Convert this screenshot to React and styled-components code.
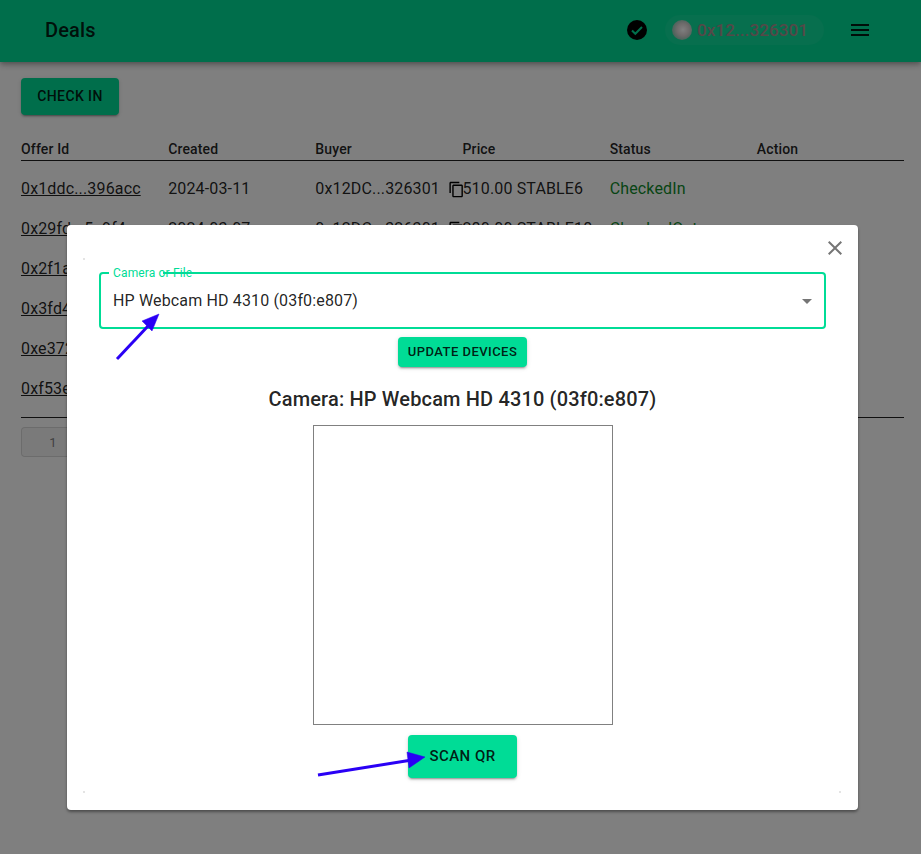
import React from "react";
import styled, { createGlobalStyle } from "styled-components";

const GlobalStyle = createGlobalStyle`
  html, body {
    margin: 0;
    padding: 0;
    background: #fff;
    font-family: Roboto, "Liberation Sans", sans-serif;
    color: rgba(0, 0, 0, 0.87);
  }
`;

const Page = styled.div`
  position: relative;
  width: 921px;
  height: 854px;
  overflow: hidden;
`;

const Header = styled.header`
  display: flex;
  align-items: center;
  height: 62px;
  padding: 0 49px 2px 45px;
  box-sizing: border-box;
  background: #00dc96;
  box-shadow: 0 2px 4px -1px rgba(0, 0, 0, 0.2), 0 4px 5px rgba(0, 0, 0, 0.14),
    0 1px 10px rgba(0, 0, 0, 0.12);
`;

const Title = styled.h1`
  flex: 1;
  margin: 0;
  font-size: 20px;
  font-weight: 500;
  line-height: 32px;
  letter-spacing: 0.15px;
`;

const VerifiedIcon = styled.svg`
  width: 24px;
  height: 24px;
  margin-right: 16px;
`;

const WalletChip = styled.div`
  display: flex;
  align-items: center;
  gap: 5px;
  width: 159px;
  height: 30px;
  box-sizing: border-box;
  padding-left: 7px;
  border-radius: 15px;
  background: rgba(255, 255, 255, 0.06);
  margin-right: 24px;
  font-size: 17px;
  font-weight: 500;
  letter-spacing: 0.1px;
  color: #a89090;
`;

const Avatar = styled.div`
  width: 20px;
  height: 20px;
  border-radius: 50%;
  background: radial-gradient(circle at 55% 48%, #fff 0%, #dcd6d6 40%, #4fb896 100%);
`;

const MenuIcon = styled.svg`
  width: 24px;
  height: 24px;
`;

const Content = styled.main`
  padding: 16px 17px 0 21px;
`;

const Button = styled.button`
  display: block;
  border: 0;
  border-radius: 4px;
  background: #00dc96;
  color: rgba(0, 0, 0, 0.87);
  font-family: inherit;
  font-weight: 500;
  text-transform: uppercase;
  font-size: ${(p) => p.$size || 14}px;
  letter-spacing: ${(p) => p.$spacing || 0.4}px;
  width: ${(p) => p.$w}px;
  height: ${(p) => p.$h}px;
  padding: 0 0 2px;
  box-shadow: 0 3px 1px -2px rgba(0, 0, 0, 0.2), 0 2px 2px rgba(0, 0, 0, 0.14),
    0 1px 5px rgba(0, 0, 0, 0.12);
`;

const Table = styled.div`
  margin-top: 23px;
  border-bottom: 1px solid rgba(0, 0, 0, 0.87);
  padding-bottom: 9px;
`;

const Row = styled.div`
  display: grid;
  grid-template-columns: repeat(6, 147.17px);
  align-items: center;
  height: 40px;
  font-size: 16px;
  letter-spacing: 0.15px;
`;

const HeadRow = styled(Row)`
  height: 23px;
  margin-bottom: 7px;
  font-size: 14px;
  font-weight: 500;
  border-bottom: 1px solid rgba(0, 0, 0, 0.87);
  box-sizing: border-box;
`;

const OfferLink = styled.a`
  color: inherit;
  text-decoration: underline;
`;

const BuyerCell = styled.div`
  display: flex;
  align-items: center;
  white-space: nowrap;
`;

const CopyIcon = styled.svg`
  width: 17px;
  height: 17px;
  margin: 2px 0 0 8px;
  flex-shrink: 0;
`;

const Status = styled.div`
  color: #0f8a2a;
`;

const Pagination = styled.div`
  display: flex;
  margin-top: 9px;
`;

const PageButton = styled.div`
  display: flex;
  align-items: center;
  justify-content: center;
  width: 64px;
  height: 30px;
  border: 1px solid rgba(0, 0, 0, 0.12);
  border-radius: 4px;
  box-sizing: border-box;
  background: rgba(0, 0, 0, 0.04);
  font-size: 13px;
  color: rgba(0, 0, 0, 0.5);
`;

const Overlay = styled.div`
  position: absolute;
  inset: 0;
  background: rgba(0, 0, 0, 0.5);
`;

const Modal = styled.section`
  position: absolute;
  left: 67px;
  top: 225px;
  width: 791px;
  height: 585px;
  box-sizing: border-box;
  padding: 47px 32px 0;
  display: flex;
  flex-direction: column;
  align-items: center;
  background: #fff;
  border-radius: 4px;
  box-shadow: 0 2px 3px rgba(0, 0, 0, 0.4);
`;

const CloseButton = styled.svg`
  position: absolute;
  top: 11px;
  right: 11px;
  width: 24px;
  height: 24px;
`;

const CornerMark = styled.span`
  position: absolute;
  left: ${(p) => p.$x}px;
  top: ${(p) => p.$y}px;
  width: 2px;
  height: 2px;
  background: #e4e4e4;
`;

const SelectBox = styled.div`
  position: relative;
  display: flex;
  align-items: center;
  justify-content: space-between;
  align-self: stretch;
  height: 57px;
  box-sizing: border-box;
  border: 2px solid #00dc96;
  border-radius: 4px;
  padding: 0 9px 0 12px;
  font-size: 16px;
  letter-spacing: 0.15px;
`;

const SelectLabel = styled.span`
  position: absolute;
  left: 12px;
  top: -8px;
  font-size: 12px;
  line-height: 14px;
  letter-spacing: 0.15px;
  color: #00dc96;
`;

const Notch = styled.span`
  position: absolute;
  left: 8px;
  top: -2px;
  width: 54px;
  height: 2px;
  background: #fff;
`;

const Caret = styled.svg`
  width: 24px;
  height: 24px;
  margin-right: -4px;
`;

const ScannerTitle = styled.h2`
  margin: 20px 0 14px;
  font-size: 20px;
  font-weight: 500;
  line-height: 24px;
  letter-spacing: 0.15px;
`;

const VideoFrame = styled.div`
  width: 300px;
  height: 300px;
  box-sizing: border-box;
  border: 1px solid #808080;
  margin-bottom: 10px;
`;

const UpdateWrap = styled.div`
  margin-top: 8px;
`;

const Annotations = styled.svg`
  position: absolute;
  inset: 0;
  width: 921px;
  height: 854px;
  pointer-events: none;
`;

const deals = [
  ["0x1ddc...396acc", "2024-03-11", "510.00 STABLE6", "CheckedIn"],
  ["0x29fd...5c9f4", "2024-03-07", "280.00 STABLE18", "CheckedOut"],
  ["0x2f1a...7b21e", "2024-03-07", "120.00 STABLE6", "CheckedOut"],
  ["0x3fd4...e0a13", "2024-03-05", "300.00 STABLE6", "CheckedOut"],
  ["0xe372...91cd0", "2024-03-02", "450.00 STABLE6", "CheckedOut"],
  ["0xf53e...44b7a", "2024-02-28", "150.00 STABLE6", "CheckedOut"],
];

export default function App() {
  return (
    <Page>
      <GlobalStyle />
      <Header>
        <Title>Deals</Title>
        <VerifiedIcon viewBox="0 0 24 24">
          <circle cx="12" cy="12" r="10" fill="#000" />
          <path d="M7 12.5l3.3 3.3L17 9" fill="none" stroke="#00dc96" strokeWidth="2" />
        </VerifiedIcon>
        <WalletChip>
          <Avatar />
          <span>0x12...326301</span>
        </WalletChip>
        <MenuIcon viewBox="0 0 24 24">
          <path d="M3 18h18v-2H3v2zm0-5h18v-2H3v2zm0-7v2h18V6H3z" fill="rgba(0,0,0,0.87)" />
        </MenuIcon>
      </Header>
      <Content>
        <Button $w={98} $h={37}>Check in</Button>
        <Table>
          <HeadRow>
            <div>Offer Id</div>
            <div>Created</div>
            <div>Buyer</div>
            <div>Price</div>
            <div>Status</div>
            <div>Action</div>
          </HeadRow>
          {deals.map((d) => (
            <Row key={d[0]}>
              <div><OfferLink href="#">{d[0]}</OfferLink></div>
              <div>{d[1]}</div>
              <BuyerCell>
                0x12DC...326301
                <CopyIcon viewBox="0 0 24 24">
                  <path d="M16 1H4c-1.1 0-2 .9-2 2v14h2V3h12V1zm3 4H8c-1.1 0-2 .9-2 2v14c0 1.1.9 2 2 2h11c1.1 0 2-.9 2-2V7c0-1.1-.9-2-2-2zm0 16H8V7h11v14z" />
                </CopyIcon>
              </BuyerCell>
              <div>{d[2]}</div>
              <Status>{d[3]}</Status>
              <div />
            </Row>
          ))}
        </Table>
        <Pagination>
          <PageButton>1</PageButton>
        </Pagination>
      </Content>
      <Overlay />
      <Modal>
        <CloseButton viewBox="0 0 24 24">
          <path d="M19 6.41 17.59 5 12 10.59 6.41 5 5 6.41 10.59 12 5 17.59 6.41 19 12 13.41 17.59 19 19 17.59 13.41 12z" fill="rgba(0,0,0,0.54)" />
        </CloseButton>
        <CornerMark $x={16} $y={33} />
        <CornerMark $x={16} $y={566} />
        <CornerMark $x={772} $y={566} />
        <SelectBox>
          <Notch />
          <SelectLabel>Camera or File</SelectLabel>
          <span>HP Webcam HD 4310 (03f0:e807)</span>
          <Caret viewBox="0 0 24 24">
            <path d="M7 10l5 5 5-5z" fill="rgba(0,0,0,0.54)" />
          </Caret>
        </SelectBox>
        <UpdateWrap>
          <Button $w={129} $h={30} $size={13} $spacing={0.46}>Update devices</Button>
        </UpdateWrap>
        <ScannerTitle>Camera: HP Webcam HD 4310 (03f0:e807)</ScannerTitle>
        <VideoFrame />
        <Button $w={109} $h={43} $size={15} $spacing={0.46}>Scan QR</Button>
      </Modal>
      <Annotations viewBox="0 0 921 854">
        <g fill="#2a00f5" stroke="#2a00f5">
          <line x1="117" y1="359" x2="149" y2="325" strokeWidth="3" />
          <polygon points="159,314 142,321 152,331" strokeWidth="0.5" />
          <line x1="318" y1="775" x2="412" y2="760" strokeWidth="3" />
          <polygon points="425,757 407,752 409,768" strokeWidth="0.5" />
        </g>
      </Annotations>
    </Page>
  );
}
